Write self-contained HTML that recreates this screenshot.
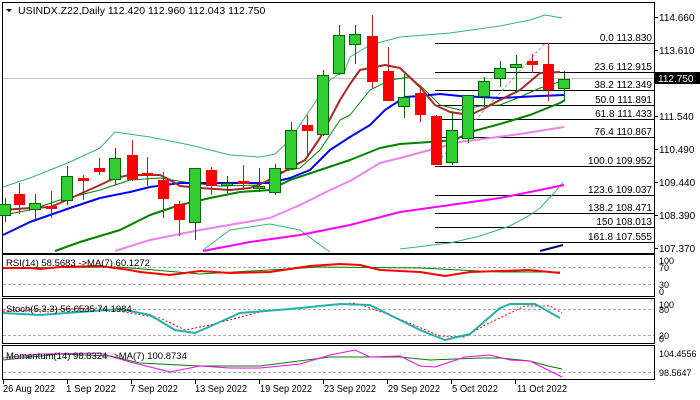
<!DOCTYPE html>
<html><head><meta charset="utf-8"><style>
body{margin:0;background:#fff;width:700px;height:400px;overflow:hidden}
svg{display:block;font-family:"Liberation Sans",sans-serif}
</style></head><body>
<svg width="700" height="400" viewBox="0 0 700 400">
<rect width="700" height="400" fill="#fff"/>
<g fill="none" stroke="#000" stroke-width="1">
<rect x="2.5" y="2.5" width="652" height="251"/>
<rect x="2.5" y="254.5" width="652" height="42"/>
<rect x="2.5" y="298.5" width="652" height="45"/>
<rect x="2.5" y="345.5" width="652" height="34"/>
</g>
<line x1="3" y1="78.5" x2="654" y2="78.5" stroke="#c0c0c0"/>
<g stroke="#000" stroke-width="1">
<line x1="435" y1="43.5" x2="654" y2="43.5"/>
<line x1="435" y1="72.5" x2="654" y2="72.5"/>
<line x1="435" y1="90.5" x2="654" y2="90.5"/>
<line x1="435" y1="105.5" x2="654" y2="105.5"/>
<line x1="435" y1="119.5" x2="654" y2="119.5"/>
<line x1="435" y1="137.5" x2="654" y2="137.5"/>
<line x1="435" y1="166.5" x2="654" y2="166.5"/>
<line x1="435" y1="195.5" x2="654" y2="195.5"/>
<line x1="435" y1="213.5" x2="654" y2="213.5"/>
<line x1="435" y1="227.5" x2="654" y2="227.5"/>
<line x1="435" y1="242.5" x2="654" y2="242.5"/>
</g>
<line x1="435" y1="165" x2="545" y2="43" stroke="#999" stroke-dasharray="3,2"/>
<g font-size="10" fill="#000" text-anchor="end">
<text x="652" y="41">0.0 113.830</text>
<text x="652" y="70">23.6 112.915</text>
<text x="652" y="88">38.2 112.349</text>
<text x="652" y="103">50.0 111.891</text>
<text x="652" y="117">61.8 111.433</text>
<text x="652" y="135">76.4 110.867</text>
<text x="652" y="164">100.0 109.952</text>
<text x="652" y="193">123.6 109.037</text>
<text x="652" y="211">138.2 108.471</text>
<text x="652" y="225">150 108.013</text>
<text x="652" y="240">161.8 107.555</text>
</g>
<g fill="none" stroke-linejoin="round">
<polyline stroke="#3cb371" stroke-width="1" points="3,187 30,178 50,170 70,162 100,148 115,132 150,137 190,145 230,155 260,157 275,154 290,140 310,110 330,80 345,70 350,57 370,45 400,37 450,33 500,26 530,20 545,15 562,18"/>
<polyline stroke="#3cb371" stroke-width="1" points="203,250 230,230 270,224 300,230 320,245 330,252"/>
<polyline stroke="#3cb371" stroke-width="1" points="400,249 450,243 480,236 510,226 530,215 540,208 555,192 563,182"/>
<polyline stroke="#ee82ee" stroke-width="2" points="115,251 150,240 200,230 270,218 300,205 330,190 350,181 380,163 400,158 430,150 460,142 490,138 520,134 564,127"/>
<polyline stroke="#ff00ff" stroke-width="2" points="203,251 250,242 300,235 350,225 400,212 450,205 500,198 540,190 564,185"/>
<polyline stroke="#000080" stroke-width="2" points="540,251 563,245"/>
<polyline stroke="#008000" stroke-width="2" points="55,251 80,242 120,230 150,215 180,205 210,198 240,192 270,190 290,180 320,170 350,160 380,148 400,144 430,142 455,140 470,132 500,124 530,115 560,103 565,100"/>
<polyline stroke="#008000" stroke-width="1" points="3,215 30,210 60,200 100,190 130,180 160,178 190,183 220,186 260,185 280,172 300,168 320,150 340,120 350,115 370,90 390,80 410,77 425,90 440,105 460,110 480,106 500,105 520,97 540,88 565,80"/>
<polyline stroke="#0000ff" stroke-width="2" points="3,235 30,222 70,208 100,198 130,192 150,187 180,183 210,183 240,183 270,183 290,178 310,170 330,150 350,137 370,125 385,110 405,97 420,96 440,94 460,96 480,97 500,98 520,97 540,96 564,95"/>
<polyline stroke="#a52a2a" stroke-width="2" points="3,210 30,208 50,207 60,203 80,194 100,185 115,178 130,175 160,175 170,180 180,186 200,188 230,190 250,188 270,180 290,168 305,160 320,138 340,100 350,84 360,70 385,65 400,68 420,87 435,105 450,112 470,115 485,108 500,100 520,90 540,73 560,72"/>
</g>
<g stroke="#006400" fill="#32cd32">
<line x1="5.5" y1="198" x2="5.5" y2="222"/><rect x="-0.5" y="204.5" width="11" height="11"/>
<line x1="35.5" y1="194" x2="35.5" y2="220"/><rect x="29.5" y="203.5" width="11" height="6"/>
<line x1="67.5" y1="166" x2="67.5" y2="205"/><rect x="61.5" y="176.5" width="11" height="24"/>
<line x1="115.5" y1="148" x2="115.5" y2="185"/><rect x="109.5" y="158.5" width="11" height="21"/>
<line x1="195.5" y1="168" x2="195.5" y2="240"/><rect x="189.5" y="168.5" width="11" height="54"/>
<line x1="227.5" y1="176" x2="227.5" y2="193"/><rect x="221.5" y="183.5" width="11" height="2"/>
<line x1="259.5" y1="168" x2="259.5" y2="192"/><rect x="253.5" y="186.5" width="11" height="2"/>
<line x1="275.5" y1="164" x2="275.5" y2="195"/><rect x="269.5" y="168.5" width="11" height="24"/>
<line x1="291.5" y1="122" x2="291.5" y2="170"/><rect x="285.5" y="130.5" width="11" height="38"/>
<line x1="323.5" y1="70" x2="323.5" y2="136"/><rect x="317.5" y="75.5" width="11" height="59"/>
<line x1="339.5" y1="25" x2="339.5" y2="75"/><rect x="333.5" y="35.5" width="11" height="38"/>
<line x1="355.5" y1="25" x2="355.5" y2="64"/><rect x="349.5" y="34.5" width="11" height="10"/>
<line x1="404.5" y1="74" x2="404.5" y2="118"/><rect x="398.5" y="97.5" width="11" height="9"/>
<line x1="452.5" y1="113" x2="452.5" y2="165"/><rect x="446.5" y="130.5" width="11" height="32"/>
<line x1="468.5" y1="95" x2="468.5" y2="143"/><rect x="462.5" y="95.5" width="11" height="43"/>
<line x1="484.5" y1="77" x2="484.5" y2="107"/><rect x="478.5" y="81.5" width="11" height="15"/>
<line x1="500.5" y1="61" x2="500.5" y2="87"/><rect x="494.5" y="68.5" width="11" height="10"/>
<line x1="516.5" y1="55" x2="516.5" y2="93"/><rect x="510.5" y="64.5" width="11" height="3"/>
<line x1="564.5" y1="71" x2="564.5" y2="100"/><rect x="558.5" y="79.5" width="11" height="9"/>
</g>
<g fill="#ff0000">
<g stroke="#b22222">
<line x1="19.5" y1="183" x2="19.5" y2="214"/><line x1="51.5" y1="191" x2="51.5" y2="218"/><line x1="83.5" y1="175" x2="83.5" y2="200"/><line x1="99.5" y1="158" x2="99.5" y2="175"/><line x1="132.5" y1="140" x2="132.5" y2="181"/><line x1="147.5" y1="157" x2="147.5" y2="186"/><line x1="163.5" y1="172" x2="163.5" y2="218"/><line x1="179.5" y1="201" x2="179.5" y2="236"/><line x1="211.5" y1="167" x2="211.5" y2="195"/><line x1="243.5" y1="165" x2="243.5" y2="190"/><line x1="307.5" y1="115" x2="307.5" y2="155"/><line x1="372.5" y1="15" x2="372.5" y2="88"/><line x1="388.5" y1="47" x2="388.5" y2="101"/><line x1="420.5" y1="88" x2="420.5" y2="122"/><line x1="436.5" y1="115" x2="436.5" y2="165"/><line x1="532.5" y1="54" x2="532.5" y2="73"/><line x1="548.5" y1="43" x2="548.5" y2="101"/>
</g>
<rect x="14" y="194" width="11" height="11"/><rect x="46" y="206" width="11" height="3"/><rect x="78" y="178" width="11" height="3"/><rect x="94" y="168" width="11" height="4"/><rect x="127" y="155" width="11" height="25"/><rect x="142" y="173" width="11" height="3"/><rect x="158" y="180" width="11" height="19"/><rect x="174" y="204" width="11" height="16"/><rect x="206" y="170" width="11" height="16"/><rect x="238" y="181" width="11" height="3"/><rect x="302" y="125" width="11" height="6"/><rect x="367" y="36" width="11" height="46"/><rect x="383" y="71" width="11" height="30"/><rect x="415" y="93" width="11" height="22"/><rect x="431" y="116" width="11" height="49"/><rect x="527" y="61" width="11" height="4"/><rect x="543" y="64" width="11" height="26"/>
</g>
<path d="M6 9 L12 9 L9 12 Z" fill="#000"/>
<text x="18" y="14" font-size="10.5">USINDX.Z22,Daily  112.420 112.960 112.043 112.750</text>
<g font-size="10" fill="#000">
<g stroke="#000"><line x1="654" y1="17.5" x2="658" y2="17.5"/><line x1="654" y1="50.5" x2="658" y2="50.5"/><line x1="654" y1="116.5" x2="658" y2="116.5"/><line x1="654" y1="149.5" x2="658" y2="149.5"/><line x1="654" y1="182.5" x2="658" y2="182.5"/><line x1="654" y1="215.5" x2="658" y2="215.5"/><line x1="654" y1="248.5" x2="658" y2="248.5"/></g>
<text x="659" y="21">114.660</text>
<text x="659" y="54">113.610</text>
<text x="659" y="120">111.540</text>
<text x="659" y="153">110.490</text>
<text x="659" y="186">109.440</text>
<text x="659" y="219">108.390</text>
<text x="659" y="252">107.370</text>
<rect x="655" y="72" width="45" height="12" fill="#000"/>
<text x="658" y="82" fill="#fff">112.750</text>
<text x="659" y="264" font-size="9">100</text><text x="659" y="271" font-size="9">70</text><text x="659" y="288" font-size="9">30</text><text x="659" y="295" font-size="9">0</text>
<text x="659" y="308" font-size="9">100</text><text x="659" y="313" font-size="9">80</text><text x="659" y="339" font-size="9">20</text><text x="659" y="342" font-size="9">0</text>
<text x="659" y="357" font-size="9">104.4556</text><text x="659" y="376" font-size="9">98.5647</text>
</g>
<g stroke="#aaa" stroke-dasharray="3,2"><line x1="3" y1="267.5" x2="654" y2="267.5"/><line x1="3" y1="284.5" x2="654" y2="284.5"/>
<line x1="3" y1="309.5" x2="654" y2="309.5"/><line x1="3" y1="335.5" x2="654" y2="335.5"/><line x1="3" y1="372.5" x2="654" y2="372.5"/></g>
<g fill="none">
<polyline stroke="#008000" stroke-width="1" points="3,268 120,267 200,274 320,267 420,268 500,272 560,272"/>
<polyline stroke="#ff0000" stroke-width="2" points="3,268 30,268 40,269 60,267 100,266 130,270 140,272 170,275 200,271 230,273 270,272 310,266 340,264 360,265 380,270 420,272 445,276 470,272 500,271 530,270 560,273"/>
<polyline stroke="#ff0000" stroke-width="1" stroke-dasharray="2,2" points="3,311 100,308 160,318 185,330 210,325 260,312 300,308 355,303 390,315 440,336 465,337 485,325 525,306 550,306 562,313"/>
<polyline stroke="#20b2aa" stroke-width="2" points="3,313 40,315 120,309 150,315 175,330 195,333 220,322 240,313 290,309 340,304 370,305 420,330 445,340 470,334 500,308 510,304 535,304 560,318"/>
<polyline stroke="#008000" stroke-width="1" points="3,360 60,354 110,356 140,363 200,366 260,366 330,357 370,357 400,357 430,360 480,358 500,358 530,361 548,366 562,369"/>
<polyline stroke="#ff00ff" stroke-width="1" points="3,358 40,354 100,353 130,362 170,372 200,366 230,368 260,368 300,364 330,355 355,350 370,357 400,356 420,366 435,367 465,357 490,355 510,360 530,361 550,371 562,377"/>
</g>
<g font-size="9.5" fill="#000">
<text x="6" y="266">RSI(14) 58.5683  -&gt;MA(7) 60.1272</text>
<text x="6" y="312">Stoch(5,3,3) 56.0535 74.1984</text>
<text x="6" y="359">Momentum(14) 98.8324  -&gt;MA(7) 100.8734</text>
</g>
<g stroke="#000"><line x1="3.5" y1="380" x2="3.5" y2="384"/><line x1="67.5" y1="380" x2="67.5" y2="384"/><line x1="131.5" y1="380" x2="131.5" y2="384"/><line x1="195.5" y1="380" x2="195.5" y2="384"/><line x1="259.5" y1="380" x2="259.5" y2="384"/><line x1="323.5" y1="380" x2="323.5" y2="384"/><line x1="387.5" y1="380" x2="387.5" y2="384"/><line x1="451.5" y1="380" x2="451.5" y2="384"/><line x1="515.5" y1="380" x2="515.5" y2="384"/></g>
<g font-size="10" fill="#000">
<text x="3" y="392" textLength="52" lengthAdjust="spacingAndGlyphs">26 Aug 2022</text>
<text x="66" y="392" textLength="50" lengthAdjust="spacingAndGlyphs">1 Sep 2022</text>
<text x="130" y="392" textLength="48" lengthAdjust="spacingAndGlyphs">7 Sep 2022</text>
<text x="195" y="392" textLength="52" lengthAdjust="spacingAndGlyphs">13 Sep 2022</text>
<text x="260" y="392" textLength="52" lengthAdjust="spacingAndGlyphs">19 Sep 2022</text>
<text x="324" y="392" textLength="52" lengthAdjust="spacingAndGlyphs">23 Sep 2022</text>
<text x="388" y="392" textLength="52" lengthAdjust="spacingAndGlyphs">29 Sep 2022</text>
<text x="452" y="392" textLength="46" lengthAdjust="spacingAndGlyphs">5 Oct 2022</text>
<text x="517" y="392" textLength="50" lengthAdjust="spacingAndGlyphs">11 Oct 2022</text>
</g>
</svg>
</body></html>
